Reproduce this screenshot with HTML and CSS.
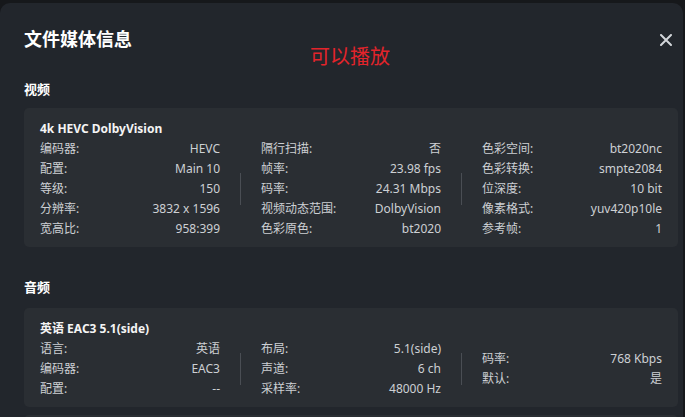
FILE: index.html
```html
<!DOCTYPE html>
<html lang="zh-CN">
<head>
<meta charset="utf-8">
<title>文件媒体信息</title>
<link rel="stylesheet" href="styles.css">
</head>
<body>
<div class="dialog">
  <div class="header">
    <h1 class="title">文件媒体信息</h1>
    <button class="close" aria-label="关闭">
      <svg width="12" height="12" viewBox="0 0 12 12"><path d="M1 1 L11 11 M11 1 L1 11" stroke="#d3d6da" stroke-width="2" stroke-linecap="round" fill="none"/></svg>
    </button>
  </div>
  <div class="note">可以播放</div>

  <h2 class="section">视频</h2>
  <div class="card">
    <div class="card-title">4k HEVC DolbyVision</div>
    <div class="cols">
      <div class="col">
        <div class="row"><span>编码器:</span><span>HEVC</span></div>
        <div class="row"><span>配置:</span><span>Main 10</span></div>
        <div class="row"><span>等级:</span><span>150</span></div>
        <div class="row"><span>分辨率:</span><span>3832 x 1596</span></div>
        <div class="row"><span>宽高比:</span><span>958:399</span></div>
      </div>
      <div class="divider"></div>
      <div class="col">
        <div class="row"><span>隔行扫描:</span><span>否</span></div>
        <div class="row"><span>帧率:</span><span>23.98 fps</span></div>
        <div class="row"><span>码率:</span><span>24.31 Mbps</span></div>
        <div class="row"><span>视频动态范围:</span><span>DolbyVision</span></div>
        <div class="row"><span>色彩原色:</span><span>bt2020</span></div>
      </div>
      <div class="divider"></div>
      <div class="col">
        <div class="row"><span>色彩空间:</span><span>bt2020nc</span></div>
        <div class="row"><span>色彩转换:</span><span>smpte2084</span></div>
        <div class="row"><span>位深度:</span><span>10 bit</span></div>
        <div class="row"><span>像素格式:</span><span>yuv420p10le</span></div>
        <div class="row"><span>参考帧:</span><span>1</span></div>
      </div>
    </div>
  </div>

  <h2 class="section section-audio">音频</h2>
  <div class="card">
    <div class="card-title">英语 EAC3 5.1(side)</div>
    <div class="cols">
      <div class="col">
        <div class="row"><span>语言:</span><span>英语</span></div>
        <div class="row"><span>编码器:</span><span>EAC3</span></div>
        <div class="row"><span>配置:</span><span>--</span></div>
      </div>
      <div class="divider"></div>
      <div class="col">
        <div class="row"><span>布局:</span><span>5.1(side)</span></div>
        <div class="row"><span>声道:</span><span>6 ch</span></div>
        <div class="row"><span>采样率:</span><span>48000 Hz</span></div>
      </div>
      <div class="divider"></div>
      <div class="col">
        <div class="row"><span>码率:</span><span>768 Kbps</span></div>
        <div class="row"><span>默认:</span><span>是</span></div>
      </div>
    </div>
  </div>
  <div class="card card-next"></div>
</div>
</body>
</html>
```

FILE: styles.css
```css
html, body {
  margin: 0;
  padding: 0;
  height: 100%;
  overflow: hidden;
  background: #16181b;
}
body {
  font-family: "Noto Sans", "Noto Sans CJK SC", sans-serif;
  color: #cdd0d4;
  font-size: 12px;
}
.dialog {
  position: relative;
  margin: 3px 2px 0 0;
  background: #22262c;
  border-radius: 10px 10px 0 0;
  padding: 24px 5px 0 24px;
  min-height: 500px;
}
.header {
  display: flex;
  align-items: center;
  justify-content: space-between;
  height: 24px;
  padding-right: 5px;
}
.title {
  margin: 0;
  font-size: 18px;
  line-height: 24px;
  font-weight: 700;
  color: #ffffff;
}
.close {
  background: none;
  border: 0;
  padding: 0;
  width: 14px;
  height: 14px;
  display: flex;
  align-items: center;
  justify-content: center;
  margin-top: 2px;
  cursor: pointer;
}
.note {
  position: absolute;
  left: 310px;
  top: 40px;
  font-size: 20px;
  line-height: 26px;
  color: #e3242b;
  font-family: "Noto Sans CJK SC", sans-serif;
}
.section {
  margin: 28px 0 9px;
  font-size: 13px;
  line-height: 20px;
  font-weight: 700;
  color: #ffffff;
}
.card {
  background: #2a2e33;
  border-radius: 5px;
  padding: 11px 16px 8px;
  margin-top: 8px;
}
.section + .card {
  margin-top: 0;
}
.section-audio {
  margin-top: 30px;
  margin-bottom: 11px;
}
.card-next {
  height: 60px;
  padding: 0;
}
.card-title {
  font-size: 12px;
  line-height: 20px;
  font-weight: 700;
  color: #f4f4f4;
}
.cols {
  display: flex;
  align-items: center;
}
.col {
  width: 180px;
  display: flex;
  flex-direction: column;
}
.row {
  display: flex;
  justify-content: space-between;
  height: 20px;
  line-height: 20px;
  white-space: nowrap;
}
.divider {
  width: 1px;
  height: 32px;
  margin: 0 20px;
  background: #4a4e54;
}
```
